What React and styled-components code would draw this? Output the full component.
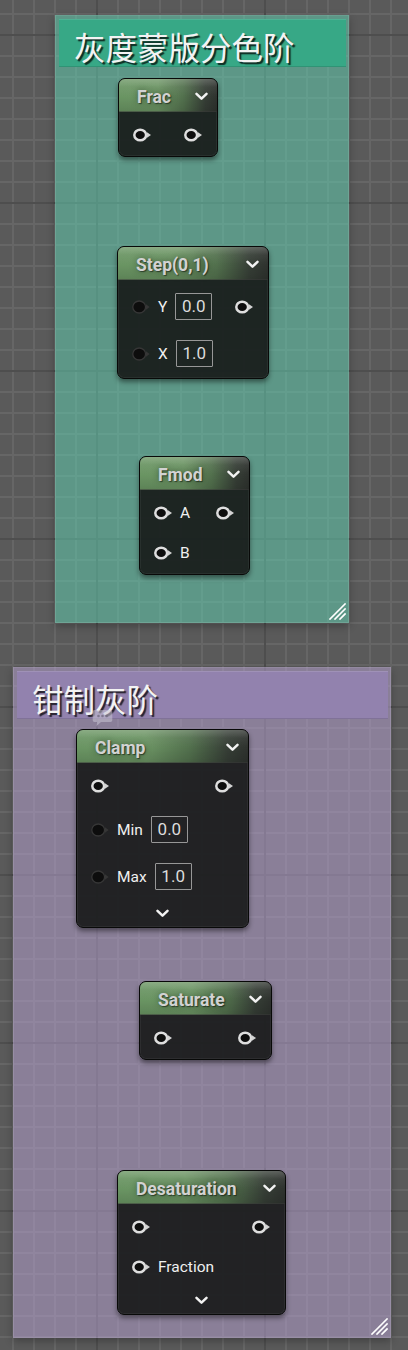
import React from 'react';
import styled, { createGlobalStyle } from 'styled-components';

const GlobalStyle = createGlobalStyle`
  html, body { margin: 0; padding: 0; background: #5a5a5a; }
  body { width: 408px; height: 1350px; overflow: hidden; font-family: Roboto, "Noto Sans", sans-serif; }
`;

const Canvas = styled.div`
  position: relative;
  width: 408px;
  height: 1350px;
  overflow: hidden;
  background-color: #5a5a5a;
  background-image:
    linear-gradient(to right, #4e4e4e 2px, transparent 2px),
    linear-gradient(to bottom, #4e4e4e 2px, transparent 2px),
    linear-gradient(to right, #666666 2px, transparent 2px),
    linear-gradient(to bottom, #666666 2px, transparent 2px);
  background-size: 168px 168px, 168px 168px, 21px 21px, 21px 21px;
  background-position: 96px 34px, 96px 34px, 12px 13px, 12px 13px;
`;

const CommentBox = styled.section`
  position: absolute;
  left: ${p => p.$x}px;
  top: ${p => p.$y}px;
  width: ${p => p.$w}px;
  height: ${p => p.$h}px;
  box-sizing: border-box;
  padding: 3px 2px 0 3px;
  background: ${p => p.$body};
  border: 1px solid rgba(255, 255, 255, 0.08);
  box-shadow: 0 3px 8px rgba(0, 0, 0, 0.28);
`;

const CommentTitle = styled.h2`
  margin: 0;
  height: 48px;
  box-sizing: border-box;
  padding: 7px 0 0 15px;
  background: ${p => p.$color};
  box-shadow: inset 0 1px 0 rgba(255, 255, 255, 0.12), inset 0 -1px 0 rgba(0, 0, 0, 0.12);
  font-family: "Noto Sans CJK SC", "Noto Sans", sans-serif;
  font-weight: 400;
  font-size: 31.5px;
  line-height: 41px;
  color: #f3f3f3;
  text-shadow: 2px 2px 1px rgba(0, 0, 0, 0.75);
  white-space: nowrap;
`;

const ResizeGrip = styled.svg`
  position: absolute;
  right: 2px;
  bottom: 2px;
  width: 17px;
  height: 17px;
`;

const CommentBadge = styled.svg`
  position: absolute;
  left: ${p => p.$x}px;
  top: ${p => p.$y}px;
  width: 21px;
  height: 18px;
`;

const NodeFrame = styled.div`
  position: absolute;
  left: ${p => p.$x}px;
  top: ${p => p.$y}px;
  width: ${p => p.$w}px;
  box-sizing: border-box;
  border: 1px solid #080908;
  border-radius: 7px;
  background: rgba(22, 24, 23, 0.9);
  box-shadow: 0 3px 5px rgba(0, 0, 0, 0.45), inset 0 0 0 1px rgba(255, 255, 255, 0.05);
  overflow: hidden;
`;

const NodeHeader = styled.div`
  height: 33px;
  box-sizing: border-box;
  display: flex;
  align-items: center;
  justify-content: space-between;
  padding: 3px 9px 0 18px;
  border-bottom: 1px solid rgba(0, 0, 0, 0.45);
  background:
    linear-gradient(180deg, rgba(255,255,255,0.22) 0, rgba(255,255,255,0.06) 25%, rgba(0,0,0,0) 55%, rgba(0,0,0,0.12) 100%),
    linear-gradient(90deg, #6a9563 0%, #6c9464 40%, #52704d 66%, #363e36 88%, #2e322e 100%);
`;

const NodeTitle = styled.span`
  font-family: Roboto, "Noto Sans", sans-serif;
  font-weight: 700;
  font-size: 17.5px;
  color: #d2d2d2;
  text-shadow: 0 0 6px rgba(20, 40, 20, 0.55), 1px 1px 1px rgba(0, 0, 0, 0.5);
  white-space: nowrap;
`;

const NodeBody = styled.div`
  padding: 3px 0 1px;
  display: flex;
  flex-direction: column;
`;

const PinRow = styled.div`
  height: ${p => p.$h}px;
  display: flex;
  align-items: center;
  justify-content: space-between;
  padding: 0 14px;
`;

const PinGroup = styled.div`
  display: flex;
  align-items: center;
  gap: 7px;
`;

const PinLabel = styled.span`
  font-family: Roboto, "Noto Sans", sans-serif;
  font-size: 15.5px;
  color: #f0f0f0;
  white-space: nowrap;
`;

const ValueBox = styled.span`
  display: inline-block;
  box-sizing: border-box;
  width: 37px;
  height: 27px;
  margin-left: 1px;
  border: 1px solid #979797;
  border-radius: 1px;
  text-align: center;
  font-family: Roboto, "Noto Sans", sans-serif;
  font-size: 17px;
  line-height: 25px;
  color: #dcdcdc;
`;

const ExpandRow = styled.div`
  height: 26px;
  display: flex;
  align-items: center;
  justify-content: center;
`;

const Chevron = () => (
  <svg width="13" height="9" viewBox="0 0 13 9">
    <path d="M1.5 1.8 L6.5 6.6 L11.5 1.8" fill="none" stroke="#f2f2f2" strokeWidth="2.5" strokeLinecap="round" strokeLinejoin="round" />
  </svg>
);

const Pin = ({ connected = true }) => (
  <svg width="19" height="14" viewBox="0 0 19 14">
    {connected ? (
      <>
        <ellipse cx="7.2" cy="7" rx="5.9" ry="5.3" fill="#0e0e0e" stroke="#dedede" strokeWidth="2.5" />
        <path d="M13.6 3.9 L18 7 L13.6 10.1 Z" fill="#d4d4d4" />
      </>
    ) : (
      <>
        <ellipse cx="7.2" cy="7" rx="6.4" ry="6" fill="#0d0d0d" stroke="#363636" strokeWidth="1.3" />
        <path d="M14 4.2 L17.6 7 L14 9.8 Z" fill="#363636" />
      </>
    )}
  </svg>
);

const Grip = () => (
  <ResizeGrip viewBox="0 0 17 17">
    <path d="M1 16 L16 1 M6 16 L16 6 M11 16 L16 11" stroke="#ffffff" strokeWidth="1.7" strokeLinecap="square" />
  </ResizeGrip>
);

const Node = ({ x, y, w, title, children }) => (
  <NodeFrame $x={x} $y={y} $w={w}>
    <NodeHeader>
      <NodeTitle>{title}</NodeTitle>
      <Chevron />
    </NodeHeader>
    <NodeBody>{children}</NodeBody>
  </NodeFrame>
);

const InputRow = ({ label, value, connected = true, output = false }) => (
  <PinRow $h={value ? 47 : 40}>
    <PinGroup>
      <Pin connected={connected} />
      {label && <PinLabel>{label}</PinLabel>}
      {value && <ValueBox>{value}</ValueBox>}
    </PinGroup>
    {output && <Pin />}
  </PinRow>
);

const IORow = () => (
  <PinRow $h={40}>
    <Pin />
    <Pin />
  </PinRow>
);

const Expand = () => (
  <ExpandRow>
    <Chevron />
  </ExpandRow>
);

const green = { x: 55, y: 15 };
const purple = { x: 13, y: 667 };
const rel = (box, x, y) => ({ x: x - box.x - 1, y: y - box.y - 1 });

export default function App() {
  const frac = rel(green, 118, 78);
  const step = rel(green, 117, 246);
  const fmod = rel(green, 139, 456);
  const clamp = rel(purple, 76, 729);
  const sat = rel(purple, 139, 981);
  const desat = rel(purple, 117, 1170);
  const badge = rel(purple, 92, 709);
  return (
    <>
      <GlobalStyle />
      <Canvas>
        <CommentBox $x={green.x} $y={green.y} $w={294} $h={608} $body="rgba(96, 212, 180, 0.5)">
          <CommentTitle $color="#37a886">灰度蒙版分色阶</CommentTitle>
          <Node x={frac.x} y={frac.y} w={100} title="Frac">
            <IORow />
          </Node>
          <Node x={step.x} y={step.y} w={152} title="Step(0,1)">
            <InputRow label="Y" value="0.0" connected={false} output />
            <InputRow label="X" value="1.0" connected={false} />
          </Node>
          <Node x={fmod.x} y={fmod.y} w={111} title="Fmod">
            <InputRow label="A" output />
            <InputRow label="B" />
          </Node>
          <Grip />
        </CommentBox>

        <CommentBox $x={purple.x} $y={purple.y} $w={378} $h={671} $body="rgba(186, 164, 214, 0.5)">
          <CommentTitle $color="#9282ae">钳制灰阶</CommentTitle>
          <Node x={clamp.x} y={clamp.y} w={173} title="Clamp">
            <IORow />
            <InputRow label="Min" value="0.0" connected={false} />
            <InputRow label="Max" value="1.0" connected={false} />
            <Expand />
          </Node>
          <Node x={sat.x} y={sat.y} w={133} title="Saturate">
            <IORow />
          </Node>
          <Node x={desat.x} y={desat.y} w={169} title="Desaturation">
            <IORow />
            <InputRow label="Fraction" />
            <Expand />
          </Node>
          <CommentBadge $x={badge.x} $y={badge.y} viewBox="0 0 21 18">
            <path d="M2.5 1 H18.5 A1.8 1.8 0 0 1 20.3 2.8 V11.2 A1.8 1.8 0 0 1 18.5 13 H9 L4.5 17 L5 13 H2.5 A1.8 1.8 0 0 1 0.7 11.2 V2.8 A1.8 1.8 0 0 1 2.5 1 Z" fill="rgba(200, 196, 212, 0.55)" />
            <circle cx="6.5" cy="7" r="1.3" fill="rgba(110, 104, 124, 0.75)" />
            <circle cx="10.5" cy="7" r="1.3" fill="rgba(110, 104, 124, 0.75)" />
            <circle cx="14.5" cy="7" r="1.3" fill="rgba(110, 104, 124, 0.75)" />
          </CommentBadge>
          <Grip />
        </CommentBox>
      </Canvas>
    </>
  );
}
